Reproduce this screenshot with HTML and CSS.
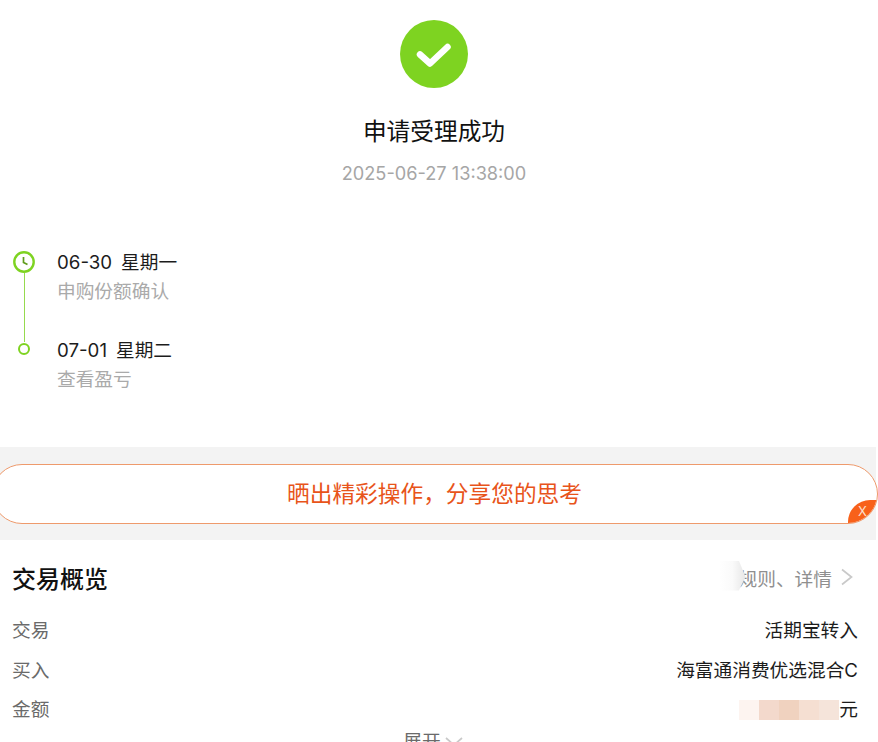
FILE: index.html
```html
<!DOCTYPE html>
<html lang="zh-CN">
<head>
    <meta charset="UTF-8">
    <meta name="viewport" content="width=device-width, initial-scale=1.0">
    <title>申请受理成功</title>
    <link rel="stylesheet" href="styles.css">
</head>
<body>
    <div class="result">
        <svg class="result-icon" width="68" height="68" viewBox="0 0 68 68">
            <circle cx="34" cy="34" r="34" fill="#7ed321"/>
            <path d="M20 34.5 L30 43.5 L47.5 27" fill="none" stroke="#fff" stroke-width="6.5" stroke-linecap="round" stroke-linejoin="round"/>
        </svg>
        <h1>申请受理成功</h1>
        <div class="result-time">2025-06-27 13:38:00</div>
    </div>

    <div class="timeline">
        <div class="step">
            <div class="step-mark">
                <svg width="24" height="24" viewBox="0 0 24 24">
                    <circle cx="12" cy="12" r="9.7" fill="#fff" stroke="#7ed321" stroke-width="2.4"/>
                    <path d="M11.5 7 V12.5 L15.5 14.5" fill="none" stroke="#5f9c1c" stroke-width="1.7"/>
                </svg>
            </div>
            <div class="step-text">
                <div class="step-date"><span class="step-day">06-30</span>星期一</div>
                <div class="step-desc">申购份额确认</div>
            </div>
        </div>
        <div class="step">
            <div class="step-mark">
                <span class="step-dot"></span>
            </div>
            <div class="step-text">
                <div class="step-date"><span class="step-day">07-01</span>星期二</div>
                <div class="step-desc">查看盈亏</div>
            </div>
        </div>
    </div>

    <div class="band">
        <div class="share">
            晒出精彩操作，分享您的思考
            <span class="share-close">X</span>
        </div>
    </div>

    <div class="overview">
        <div class="overview-head">
            <h2>交易概览</h2>
            <div class="overview-link">
                <span class="link-text">规则、详情</span>
                <svg width="14" height="18" viewBox="0 0 14 18">
                    <path d="M2 1.5 L11.5 9 L2 16.5" fill="none" stroke="#c9c9c9" stroke-width="1.7"/>
                </svg>
                <span class="link-fade"></span>
            </div>
        </div>
        <div class="row"><span class="row-label">交易</span><span>活期宝转入</span></div>
        <div class="row"><span class="row-label">买入</span><span>海富通消费优选混合C</span></div>
        <div class="row">
            <span class="row-label">金额</span>
            <span class="amount">
                <span class="mosaic">
                    <i class="m1"></i><i class="m2"></i><i class="m3"></i><i class="m4"></i><i class="m5"></i>
                </span>元
            </span>
        </div>
        <div class="expand">
            展开
            <svg width="18" height="10" viewBox="0 0 18 10">
                <path d="M1 1 L9 8 L17 1" fill="none" stroke="#c9c9c9" stroke-width="1.7"/>
            </svg>
        </div>
    </div>
</body>
</html>
```

FILE: styles.css
```css
* {
    margin: 0;
    padding: 0;
    box-sizing: border-box;
}

html, body {
    height: 742px;
    overflow: hidden;
}

body {
    background-color: #fff;
    color: #1c1c1c;
    font-family: Inter, "Noto Sans CJK SC", sans-serif;
    font-size: 18.7px;
}

.result {
    display: flex;
    flex-direction: column;
    align-items: center;
    padding: 20px 10px 0 0;
    height: 208px;
}

.result h1 {
    margin-top: 27px;
    font-size: 23.7px;
    font-weight: 400;
    line-height: 34px;
    color: #111;
}

.result-time {
    margin-top: 10px;
    font-size: 18.2px;
    line-height: 28px;
    color: #a6a6a6;
}

.timeline {
    height: 239px;
    padding-top: 39px;
}

.step {
    display: flex;
    height: 88px;
}

.step-mark {
    position: relative;
    display: flex;
    justify-content: center;
    width: 24px;
    margin-left: 12px;
    padding-top: 3px;
}

.step:first-child .step-mark::after {
    content: "";
    position: absolute;
    top: 26px;
    left: 11.5px;
    width: 1.5px;
    height: 69px;
    background-color: #96da4e;
}

.step-dot {
    width: 12px;
    height: 12px;
    margin-top: 5px;
    border: 2px solid #7ed321;
    border-radius: 50%;
}

.step-text {
    margin-left: 21px;
    padding-top: 1px;
}

.step-date {
    line-height: 30px;
}

.step-day {
    margin-right: 9px;
}

.step-desc {
    line-height: 28px;
    color: #aaa;
}

.band {
    background-color: #f3f3f3;
    padding: 17px 0 16px;
    margin-right: 2px;
}

.share {
    position: relative;
    height: 60px;
    margin-left: -8px;
    margin-right: -2px;
    background-color: #fff;
    border: 1px solid #ee9a6c;
    border-radius: 30px;
    overflow: hidden;
    text-align: center;
    line-height: 58px;
    font-size: 22.7px;
    color: #e8541a;
    padding-left: 8px;
    padding-right: 9px;
}

.share-close {
    position: absolute;
    right: 0;
    bottom: 0;
    width: 29px;
    height: 23px;
    background-color: #f8611a;
    border-top-left-radius: 22px;
    border-bottom-right-radius: 22px;
    color: #fde0cf;
    font-size: 13px;
    line-height: 23px;
    text-align: center;
}

.overview {
    padding: 0 20px 0 12px;
}

.overview-head {
    display: flex;
    justify-content: space-between;
    align-items: center;
    height: 78px;
    padding-bottom: 4px;
}

.overview-head h2 {
    font-size: 24px;
    font-weight: 500;
    color: #111;
}

.overview-link {
    position: relative;
    display: flex;
    align-items: center;
    gap: 8px;
    margin-right: 4px;
    color: #8f8f8f;
}

.link-fade {
    position: absolute;
    left: -20px;
    top: -3px;
    width: 27px;
    height: 30px;
    background: linear-gradient(90deg, #fff, #fafafa 50%, #e6e6e6);
    clip-path: polygon(0 0, 75% 0, 100% 55%, 75% 100%, 0 100%);
}

.row {
    display: flex;
    justify-content: space-between;
    height: 39.5px;
    line-height: 26px;
}

.row-label {
    color: #6a6a6a;
}

.amount {
    display: flex;
    align-items: center;
    height: 26px;
}

.mosaic {
    display: flex;
    height: 20px;
}

.mosaic i {
    width: 20px;
}

.m1 { background-color: #fdf4f0; }
.m2 { background-color: #f3d9cc; }
.m3 { background-color: #f0d2bf; }
.m4 { background-color: #f5dfd2; }
.m5 { background-color: #f5e4da; }

.expand {
    display: flex;
    align-items: center;
    justify-content: center;
    gap: 4px;
    color: #6a6a6a;
    line-height: 26px;
    margin-top: -8px;
    padding-right: 4px;
}
```
